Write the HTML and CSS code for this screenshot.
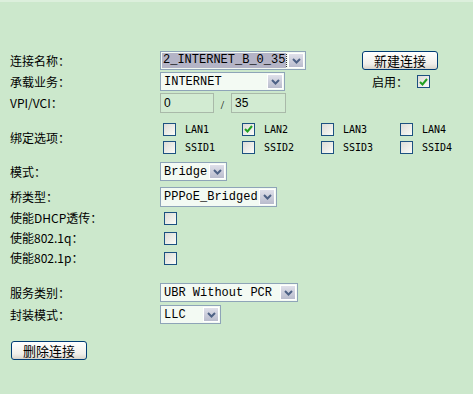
FILE: index.html
```html
<!DOCTYPE html>
<html lang="zh-CN">

<head>
    <meta charset="UTF-8">
    <title>WAN 连接</title>
    <link rel="stylesheet" href="styles.css">
</head>

<body>
    <div class="page">
        <div class="row r1">
            <span class="label">连接名称：</span>
            <div class="combo focus w-name">
                <span class="value"><span class="sel">2_INTERNET_B_0_35</span></span>
                <span class="arrow"><svg width="9" height="6" viewBox="0 0 9 6"><path d="M1 1l3.5 3.5L8 1" fill="none" stroke="#4d6185" stroke-width="2"/></svg></span>
            </div>
            <button class="btn btn-new">新建连接</button>
        </div>
        <div class="row r2">
            <span class="label">承载业务：</span>
            <div class="combo w-service">
                <span class="value">INTERNET</span>
                <span class="arrow"><svg width="9" height="6" viewBox="0 0 9 6"><path d="M1 1l3.5 3.5L8 1" fill="none" stroke="#4d6185" stroke-width="2"/></svg></span>
            </div>
            <span class="enable">启用：</span>
            <span class="check on"><svg width="9" height="8" viewBox="0 0 9 8"><path d="M1 4l2.5 2.5L8 1" fill="none" stroke="#21a121" stroke-width="2"/></svg></span>
        </div>
        <div class="row r3">
            <span class="label">VPI/VCI：</span>
            <input class="field f-vpi" type="text" value="0">
            <span class="slash">/</span>
            <input class="field f-vci" type="text" value="35">
        </div>
        <div class="row bind">
            <span class="label">绑定选项：</span>
            <div class="ports">
                <span class="port"><span class="check"></span>LAN1</span>
                <span class="port"><span class="check on"><svg width="9" height="8" viewBox="0 0 9 8"><path d="M1 4l2.5 2.5L8 1" fill="none" stroke="#21a121" stroke-width="2"/></svg></span>LAN2</span>
                <span class="port"><span class="check"></span>LAN3</span>
                <span class="port"><span class="check"></span>LAN4</span>
                <span class="port"><span class="check"></span>SSID1</span>
                <span class="port"><span class="check"></span>SSID2</span>
                <span class="port"><span class="check"></span>SSID3</span>
                <span class="port"><span class="check"></span>SSID4</span>
            </div>
        </div>
        <div class="row r-mode">
            <span class="label">模式：</span>
            <div class="combo w-mode">
                <span class="value">Bridge</span>
                <span class="arrow"><svg width="9" height="6" viewBox="0 0 9 6"><path d="M1 1l3.5 3.5L8 1" fill="none" stroke="#4d6185" stroke-width="2"/></svg></span>
            </div>
        </div>
        <div class="row r-bridge">
            <span class="label">桥类型：</span>
            <div class="combo w-bridge">
                <span class="value">PPPoE_Bridged</span>
                <span class="arrow"><svg width="9" height="6" viewBox="0 0 9 6"><path d="M1 1l3.5 3.5L8 1" fill="none" stroke="#4d6185" stroke-width="2"/></svg></span>
            </div>
        </div>
        <div class="row r-cb">
            <span class="label">使能DHCP透传：</span>
            <span class="check"></span>
        </div>
        <div class="row r-cb">
            <span class="label">使能802.1q：</span>
            <span class="check"></span>
        </div>
        <div class="row r-cb">
            <span class="label">使能802.1p：</span>
            <span class="check"></span>
        </div>
        <div class="row r-class">
            <span class="label">服务类别：</span>
            <div class="combo w-class">
                <span class="value">UBR Without PCR</span>
                <span class="arrow"><svg width="9" height="6" viewBox="0 0 9 6"><path d="M1 1l3.5 3.5L8 1" fill="none" stroke="#4d6185" stroke-width="2"/></svg></span>
            </div>
        </div>
        <div class="row r-encap">
            <span class="label">封装模式：</span>
            <div class="combo w-encap">
                <span class="value">LLC</span>
                <span class="arrow"><svg width="9" height="6" viewBox="0 0 9 6"><path d="M1 1l3.5 3.5L8 1" fill="none" stroke="#4d6185" stroke-width="2"/></svg></span>
            </div>
        </div>
        <button class="btn btn-del">删除连接</button>
    </div>
</body>

</html>
```

FILE: styles.css
```css
body {
    margin: 0;
    background-color: #cce8cc;
    font-family: "Noto Sans CJK SC", sans-serif;
    font-size: 12px;
    color: #000;
}

.page {
    border-top: 2px solid #dcefdc;
    padding: 48px 0 0 10px;
}

.row {
    display: flex;
    align-items: center;
}

.label {
    width: 150px;
    flex: none;
    line-height: 14px;
}

.r1 {
    height: 21px;
}

.r2 {
    height: 21px;
}

.r3 {
    height: 22px;
}

.bind {
    margin-top: 6px;
    height: 36px;
}

.r-mode {
    margin-top: 4px;
    height: 23px;
}

.r-bridge {
    margin-top: 3px;
    height: 22px;
}

.r-cb {
    height: 20px;
}

.r-cb .check {
    margin-left: 4px;
}

.r-class {
    margin-top: 14px;
    height: 21px;
}

.r-encap {
    margin-top: 1px;
    height: 21px;
}

/* combo boxes */
.combo {
    display: flex;
    box-sizing: border-box;
    height: 19px;
    border: 1px solid #8ea4b8;
    background-color: #f3faf3;
    padding: 1px;
}

.combo .value {
    flex: 1;
    display: flex;
    align-items: center;
    padding-left: 2px;
    font-family: "Liberation Mono", monospace;
    font-size: 12px;
    white-space: nowrap;
    overflow: hidden;
}

.combo.focus .value {
    padding-left: 0;
}

.combo .sel {
    background-color: #b4b4c6;
    outline: 1px dotted #333;
    padding: 0 1px;
    line-height: 15px;
}

.combo .arrow {
    width: 16px;
    flex: none;
    display: flex;
    align-items: center;
    justify-content: center;
    box-sizing: border-box;
    border: 1px solid #fff;
    background: linear-gradient(#dfe0ea, #b9bccd);
}

.w-name {
    width: 146px;
}

.w-service {
    width: 125px;
}

.w-mode {
    width: 67px;
}

.w-bridge {
    width: 117px;
    height: 20px;
}

.w-class {
    width: 138px;
}

.w-encap {
    width: 61px;
}

/* text fields */
.field {
    box-sizing: border-box;
    height: 20px;
    margin: 0;
    border: 1px solid #a9b9a9;
    background-color: #d2ebd2;
    padding: 0 3px;
    font-family: "Liberation Sans", sans-serif;
    font-size: 12px;
}

.f-vpi {
    width: 54px;
}

.f-vci {
    width: 55px;
}

.slash {
    width: 17px;
    text-align: center;
    font-family: "Liberation Serif", serif;
    padding-top: 4px;
}

/* checkboxes */
.check {
    display: inline-flex;
    align-items: center;
    justify-content: center;
    box-sizing: border-box;
    width: 13px;
    height: 13px;
    flex: none;
    border: 1px solid #1c5180;
    background: linear-gradient(135deg, #dcdcd7, #fbfbf8);
}

.ports {
    display: grid;
    grid-template-columns: repeat(4, 79px);
    grid-auto-rows: 18px;
    margin-left: 3px;
}

.port {
    display: flex;
    align-items: center;
    font-family: "DejaVu Sans Mono", monospace;
    font-size: 10px;
}

.port .check {
    margin-right: 9px;
}

.enable {
    margin-left: 87px;
    width: 45px;
}

/* buttons */
.btn {
    display: flex;
    align-items: center;
    justify-content: center;
    box-sizing: border-box;
    height: 19px;
    width: 76px;
    padding: 0;
    border: 1px solid #003c74;
    border-radius: 3px;
    background: linear-gradient(#ffffff, #f0efea 70%, #d8d4cb);
    font-family: "Noto Sans CJK SC", sans-serif;
    font-size: 13px;
    line-height: 1;
    color: #000;
}

.btn-new {
    margin-left: 56px;
}

.btn-del {
    margin-top: 16px;
    margin-left: 1px;
}
```
